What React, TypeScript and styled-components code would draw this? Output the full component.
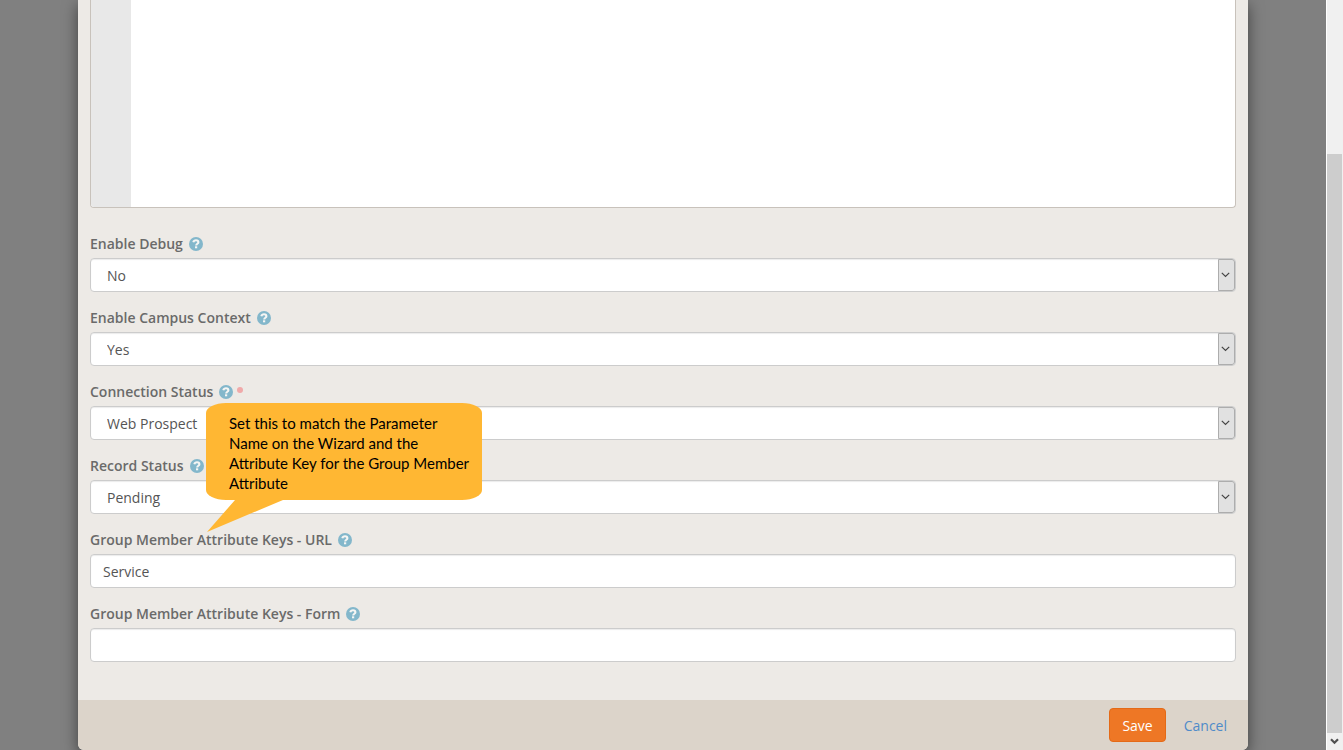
import React, { useState } from 'react';
import styled, { createGlobalStyle } from 'styled-components';

const GlobalStyle = createGlobalStyle`
  *, *::before, *::after { box-sizing: border-box; }
  html, body { margin: 0; background: #808080; }
  body {
    font-family: 'Open Sans', sans-serif;
    font-size: 14px;
    line-height: 20px;
    color: #555;
  }
`;

const Page = styled.div`
  display: flex;
  min-height: 100vh;
  background: #808080;
`;

const Backdrop = styled.main`
  flex: 1;
  min-width: 0;
  display: flex;
  justify-content: center;
  overflow: hidden;
`;

const Modal = styled.form`
  width: 100%;
  max-width: 1170px;
  display: flex;
  flex-direction: column;
  background: #edeae6;
  border-radius: 0 0 6px 6px;
  box-shadow: 0 5px 15px rgba(0, 0, 0, 0.5);
`;

const ModalBody = styled.div`
  flex: 1;
  display: flex;
  flex-direction: column;
  gap: 16px;
  padding: 0 12px 38px;
`;

const Editor = styled.div`
  display: flex;
  height: 208px;
  margin-bottom: 10px;
  overflow: hidden;
  background: #fff;
  border: 1px solid #c8c2bb;
  border-top: 0;
  border-radius: 0 0 4px 4px;
`;

const Gutter = styled.div`
  width: 40px;
  background: #e8e8e8;
`;

const EditorInput = styled.textarea`
  flex: 1;
  padding: 0 4px;
  border: 0;
  outline: 0;
  resize: none;
  background: transparent;
  font: 12px/16px 'Liberation Mono', monospace;
`;

const Field = styled.div`
  position: relative;
`;

const LabelRow = styled.div`
  display: flex;
  align-items: center;
  height: 20px;
  margin-bottom: 4px;
`;

const Label = styled.label`
  font-weight: 600;
  color: #6a6a6a;
`;

const HelpLink = styled.a`
  display: flex;
  margin-left: 6px;
  color: #83b7cb;
`;

const RequiredDot = styled.span`
  width: 6px;
  height: 6px;
  margin: 0 0 4px 4px;
  border-radius: 50%;
  background: #f0a9a9;
`;

const controlStyle = `
  display: block;
  width: 100%;
  height: 34px;
  border: 1px solid #ccc;
  border-radius: 4px;
  outline: 0;
  background: #fff;
  box-shadow: inset 0 1px 1px rgba(0, 0, 0, 0.08);
  color: #555;
  font: inherit;
`;

const TextInput = styled.input`
  ${controlStyle}
  padding: 6px 12px;
`;

const SelectBox = styled.div`
  position: relative;
`;

const Select = styled.select`
  ${controlStyle}
  appearance: none;
  padding: 4px 32px 2px 16px;
`;

const SelectArrow = styled.span`
  position: absolute;
  top: 1px;
  right: 1px;
  bottom: 1px;
  display: flex;
  align-items: center;
  justify-content: center;
  width: 17px;
  border: 1px solid #adadad;
  border-radius: 0 3px 3px 0;
  background: #e1e1e1;
  pointer-events: none;
`;

const Callout = styled.aside`
  position: absolute;
  z-index: 1;
  top: 21px;
  left: 116px;
  width: 276px;
  padding: 10px 12px 7px 23px;
  border-radius: 20px / 10px;
  background: #ffb733;
  color: #000;
  font: 400 15px/20px Lato, sans-serif;
`;

const CalloutTail = styled.svg`
  position: absolute;
  top: calc(100% - 1px);
  left: 0;
`;

const Footer = styled.footer`
  display: flex;
  justify-content: flex-end;
  gap: 5px;
  padding: 8px;
  background: #dcd4ca;
  border-radius: 0 0 6px 6px;
`;

const SaveButton = styled.button`
  height: 34px;
  padding: 2px 12px 0;
  border: 1px solid #e46a17;
  border-radius: 4px;
  background: #ee7725;
  color: #fff;
  font: inherit;
`;

const CancelLink = styled.a`
  padding: 8px 13px 6px;
  color: #4f8bc9;
  text-decoration: none;
`;

const Scrollbar = styled.div`
  display: flex;
  flex-direction: column;
  width: 17px;
  padding-right: 1px;
  background: #f0f0f0;
  border-left: 1px solid #fff;
`;

const ScrollSpace = styled.div`
  flex: 154;
`;

const ScrollThumb = styled.div`
  flex: 579;
  background: #cdcdcd;
`;

const ScrollDown = styled.div`
  display: flex;
  align-items: center;
  justify-content: center;
  height: 17px;
`;

function HelpIcon() {
  return (
    <svg width="14" height="14" viewBox="0 0 14 14" aria-hidden="true">
      <circle cx="7" cy="7" r="7" fill="currentColor" />
      <path
        d="M4.3 5.3C4.7 3.9 5.6 3.3 7 3.3c1.5 0 2.4.8 2.4 1.9 0 1.6-2.2 1.5-2.2 3.3"
        fill="none"
        stroke="#f6f6f4"
        strokeWidth="2.1"
      />
      <rect x="6" y="9.3" width="2.2" height="2" fill="#f6f6f4" />
    </svg>
  );
}

function FieldLabel({ id, text, required }: { id: string; text: string; required?: boolean }) {
  return (
    <LabelRow>
      <Label htmlFor={id}>{text}</Label>
      <HelpLink href="#help" aria-label={`Help: ${text}`}>
        <HelpIcon />
      </HelpLink>
      {required && <RequiredDot />}
    </LabelRow>
  );
}

interface SelectFieldProps {
  id: string;
  label: string;
  options: string[];
  required?: boolean;
  children?: React.ReactNode;
}

function SelectField({ id, label, options, required, children }: SelectFieldProps) {
  return (
    <Field>
      <FieldLabel id={id} text={label} required={required} />
      <SelectBox>
        <Select id={id} defaultValue={options[0]} required={required}>
          {options.map((option) => (
            <option key={option}>{option}</option>
          ))}
        </Select>
        <SelectArrow>
          <svg width="11" height="6" viewBox="0 0 11 6" aria-hidden="true">
            <path d="M0.8 0.8l3.7 3.7 3.7-3.7" fill="none" stroke="#444" strokeWidth="1.2" />
          </svg>
        </SelectArrow>
      </SelectBox>
      {children}
    </Field>
  );
}

function TextField({ id, label, initial }: { id: string; label: string; initial: string }) {
  const [value, setValue] = useState(initial);
  return (
    <Field>
      <FieldLabel id={id} text={label} />
      <TextInput id={id} type="text" value={value} onChange={(e) => setValue(e.target.value)} />
    </Field>
  );
}

export default function App() {
  return (
    <>
      <GlobalStyle />
      <Page>
        <Backdrop>
          <Modal onSubmit={(e) => e.preventDefault()}>
            <ModalBody>
              <Editor>
                <Gutter />
                <EditorInput aria-label="Lava template" spellCheck={false} />
              </Editor>
              <SelectField id="debug" label="Enable Debug" options={['No', 'Yes']} />
              <SelectField id="campus" label="Enable Campus Context" options={['Yes', 'No']} />
              <SelectField id="connection" label="Connection Status" options={['Web Prospect']} required>
                <Callout>
                  Set this to match the Parameter
                  <br />
                  Name on the Wizard and the
                  <br />
                  Attribute Key for the Group Member
                  <br />
                  Attribute
                  <CalloutTail width="90" height="33" viewBox="0 0 90 33" aria-hidden="true">
                    <path d="M30 0H80L77 1 1 33 29 1z" fill="#ffb733" />
                  </CalloutTail>
                </Callout>
              </SelectField>
              <SelectField id="record" label="Record Status" options={['Pending']} />
              <TextField id="keys-url" label="Group Member Attribute Keys - URL" initial="Service" />
              <TextField id="keys-form" label="Group Member Attribute Keys - Form" initial="" />
            </ModalBody>
            <Footer>
              <SaveButton type="submit">Save</SaveButton>
              <CancelLink href="#cancel">Cancel</CancelLink>
            </Footer>
          </Modal>
        </Backdrop>
        <Scrollbar aria-hidden="true">
          <ScrollSpace />
          <ScrollThumb />
          <ScrollDown>
            <svg width="9" height="7" viewBox="0 0 9 7">
              <path d="M1 1.2l3.5 3.5L8 1.2" fill="none" stroke="#505050" strokeWidth="2.2" />
            </svg>
          </ScrollDown>
        </Scrollbar>
      </Page>
    </>
  );
}
